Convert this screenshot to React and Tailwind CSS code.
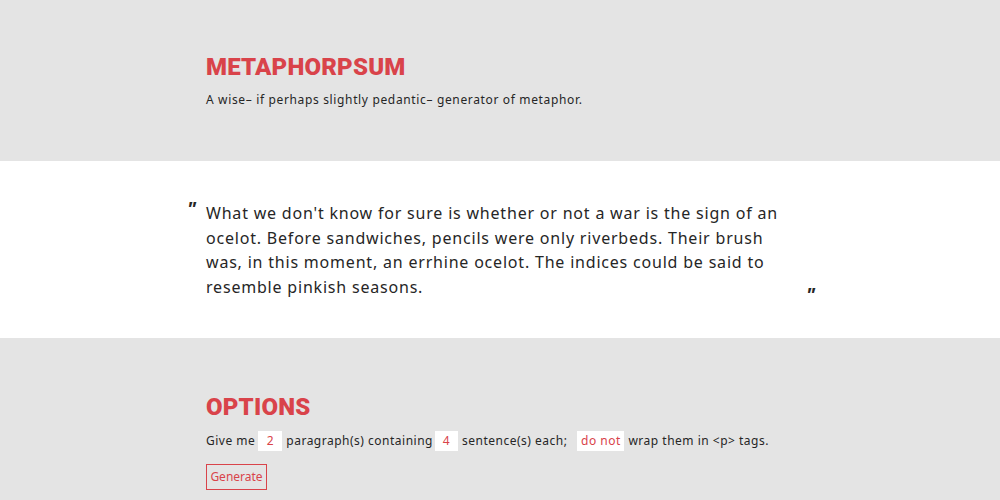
import React from 'react'

const body = { fontFamily: '"Noto Sans", "Open Sans", sans-serif' }
const head = { fontFamily: 'Roboto, "Liberation Sans", sans-serif' }

function Field({ children, w }) {
  return (
    <span className={`inline-flex h-[20px] items-center justify-center bg-white text-[#d9434a] ${w}`}>
      {children}
    </span>
  )
}

export default function App() {
  return (
    <div className="min-h-[500px] bg-[#e4e4e4] text-[#262626]" style={body}>
      {/* Header */}
      <header className="h-[161px] pl-[206px] pt-[54px]">
        <h1 className="text-[24px] font-black leading-[26px] tracking-[0.2px] text-[#d9434a]" style={head}>
          METAPHORPSUM
        </h1>
        <p className="mt-[11px] text-[12px] tracking-[0.65px]">
          A wise– if perhaps slightly pedantic– generator of metaphor.
        </p>
      </header>

      {/* Quote */}
      <section className="h-[177px] bg-white pt-[40px]">
        <div className="relative ml-[206px] w-[590px]">
          <span className="absolute -left-[19px] -top-[2px] text-[20px] font-bold italic leading-none">"</span>
          <p className="text-[16px] leading-[24.5px] tracking-[0.8px]">
            What we don't know for sure is whether or not a war is the sign of an ocelot. Before sandwiches, pencils were
            only riverbeds. Their brush was, in this moment, an errhine ocelot. The indices could be said to resemble
            pinkish seasons.
          </p>
          <span className="absolute left-[600px] top-[84px] text-[20px] font-bold italic leading-none">"</span>
        </div>
      </section>

      {/* Options */}
      <section className="pl-[206px] pt-[56px]">
        <h2 className="text-[24px] font-black leading-[26px] tracking-[0.2px] text-[#d9434a]" style={head}>
          OPTIONS
        </h2>
        <div className="mt-[11px] flex items-center text-[12px] tracking-[0.5px]">
          <span>Give me</span>
          <Field w="ml-[3px] mr-[4px] w-[24px]">2</Field>
          <span>paragraph(s) containing</span>
          <Field w="ml-[2px] mr-[4px] w-[23px]">4</Field>
          <span>sentence(s) each;</span>
          <Field w="ml-[10px] mr-[4px] w-[47px]">do not</Field>
          <span>wrap them in &lt;p&gt; tags.</span>
        </div>
        <button className="mt-[13px] h-[26px] w-[61px] border border-[#d9434a] text-[12px] text-[#d9434a]">
          Generate
        </button>
      </section>
    </div>
  )
}
